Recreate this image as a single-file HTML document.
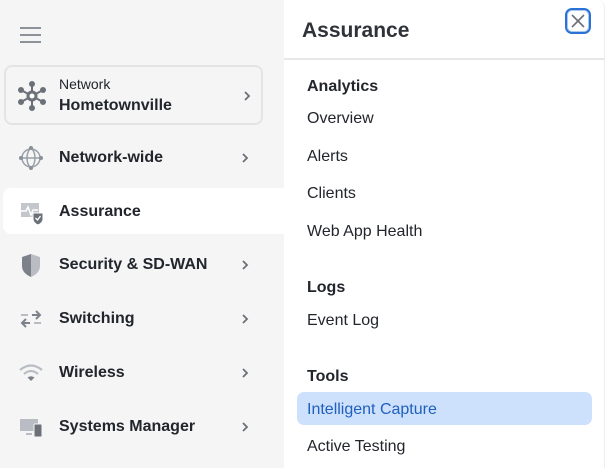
<!DOCTYPE html>
<html><head><style>
*{margin:0;padding:0;box-sizing:border-box}
body{width:608px;height:468px;overflow:hidden;background:#fff;font-family:"Liberation Sans",sans-serif;position:relative;color:#22252b}
#side{position:absolute;left:0;top:0;width:284px;height:468px;background:#f5f5f5}
.row{position:absolute;left:0;width:284px;height:46px;font-size:16px;font-weight:bold;color:#22252b}
.row .ic{position:absolute;left:18px;top:11px;width:26px;height:26px}
.row .t{position:absolute;left:59px;top:15px;line-height:18px}
.chev{position:absolute;left:240px;top:50%;margin-top:-4px;width:10px;height:10px}
.sel{left:3px;width:281px;background:#fff;border-radius:8px 0 0 8px}
.sel .t{left:56px}
#net{position:absolute;left:4px;top:65px;width:259px;height:60px;border:2px solid #e2e4e6;border-radius:8px;background:#f5f5f5}
#panel{position:absolute;left:284px;top:0;width:321px;height:468px;background:#fff;border-right:1px solid #eee;border-radius:0 8px 0 0}
.p{position:absolute;left:23px;font-size:16px;color:#22252b}
.h{font-weight:bold}
</style></head><body>
<div id="side">
<svg style="position:absolute;left:20px;top:27px" width="22" height="16"><g stroke="#6b7079" stroke-width="1.6"><line x1="0" y1="1" x2="21" y2="1"/><line x1="0" y1="8" x2="21" y2="8"/><line x1="0" y1="15" x2="21" y2="15"/></g></svg>
<div id="net">
<svg style="position:absolute;left:11px;top:14px" width="30" height="30" viewBox="0 0 30 30"><g stroke="#6b7079" stroke-width="2" fill="#6b7079"><line x1="15" y1="3" x2="15" y2="27"/><line x1="4" y1="9" x2="26" y2="21"/><line x1="4" y1="21" x2="26" y2="9"/><circle cx="15" cy="3" r="2"/><circle cx="15" cy="27" r="2"/><circle cx="4" cy="9" r="2"/><circle cx="26" cy="9" r="2"/><circle cx="4" cy="21" r="2"/><circle cx="26" cy="21" r="2"/><circle cx="15" cy="15" r="4" fill="#fff" stroke-width="3"/></g></svg>
<div style="position:absolute;left:53px;top:9px;font-size:14px;color:#22252b">Network</div>
<div style="position:absolute;left:53px;top:30px;font-size:16px;font-weight:bold">Hometownville</div>
<svg class="chev" style="left:236px" viewBox="0 0 10 10"><path d="M3 1 L7 5 L3 9" fill="none" stroke="#6b7079" stroke-width="1.8"/></svg>
</div>
<div class="row" style="top:134px"><svg class="ic" viewBox="0 0 26 26"><g fill="none" stroke="#9aa0a8" stroke-width="1.5"><circle cx="13" cy="13" r="9"/><ellipse cx="13" cy="13" rx="4" ry="9"/><line x1="4" y1="13" x2="22" y2="13"/></g><g fill="#8a9099"><circle cx="13" cy="3" r="2"/><circle cx="13" cy="23" r="2"/><circle cx="3" cy="13" r="2"/><circle cx="23" cy="13" r="2"/></g></svg><span class="t">Network-wide</span><svg class="chev" viewBox="0 0 10 10"><path d="M3 1 L7 5 L3 9" fill="none" stroke="#6b7079" stroke-width="1.8"/></svg></div>
<div class="row sel" style="top:188px"><svg class="ic" style="left:15px" viewBox="0 0 26 26"><rect x="3" y="4" width="18" height="14" fill="#c3c7cc"/><path d="M3 12 L8 12 L10 8 L13 16 L15 11 L20 11" fill="none" stroke="#fff" stroke-width="1.5"/><path d="M15 14 L25 14 L25 20 Q25 24 20 26 Q15 24 15 20Z" fill="#6b7079" stroke="#fff" stroke-width="1"/><path d="M17.5 19 L19.5 21 L22.5 17" fill="none" stroke="#fff" stroke-width="1.3"/></svg><span class="t">Assurance</span></div>
<div class="row" style="top:241px"><svg class="ic" viewBox="0 0 26 26"><path d="M13 2 L4 5 L4 14 Q4 21 13 25Z" fill="#7d828a"/><path d="M13 2 L22 5 L22 14 Q22 21 13 25Z" fill="#b9bdc3"/></svg><span class="t">Security &amp; SD-WAN</span><svg class="chev" viewBox="0 0 10 10"><path d="M3 1 L7 5 L3 9" fill="none" stroke="#6b7079" stroke-width="1.8"/></svg></div>
<div class="row" style="top:295px"><svg class="ic" viewBox="0 0 26 26"><g stroke-width="2" fill="none"><path d="M3 9 H10" stroke="#b9bdc3"/><path d="M14 9 H22 M18 5 L22 9 L18 13" stroke="#7d828a"/><path d="M16 17 H23" stroke="#b9bdc3"/><path d="M12 17 H4 M8 13 L4 17 L8 21" stroke="#7d828a"/></g></svg><span class="t">Switching</span><svg class="chev" viewBox="0 0 10 10"><path d="M3 1 L7 5 L3 9" fill="none" stroke="#6b7079" stroke-width="1.8"/></svg></div>
<div class="row" style="top:349px"><svg class="ic" viewBox="0 0 26 26"><g fill="none" stroke="#b9bdc3" stroke-width="2.2"><path d="M2 10 Q13 1 24 10"/><path d="M6 14 Q13 8 20 14"/></g><path d="M9.5 17.5 Q13 15 16.5 17.5 L13 21Z" fill="#7d828a"/></svg><span class="t">Wireless</span><svg class="chev" viewBox="0 0 10 10"><path d="M3 1 L7 5 L3 9" fill="none" stroke="#6b7079" stroke-width="1.8"/></svg></div>
<div class="row" style="top:403px"><svg class="ic" viewBox="0 0 26 26"><rect x="2" y="5" width="18" height="12" fill="#b9bdc3"/><rect x="8" y="19" width="6" height="2" fill="#b9bdc3"/><rect x="16" y="10" width="8" height="13" rx="1" fill="#6b7079" stroke="#f5f5f5" stroke-width="1"/></svg><span class="t">Systems Manager</span><svg class="chev" viewBox="0 0 10 10"><path d="M3 1 L7 5 L3 9" fill="none" stroke="#6b7079" stroke-width="1.8"/></svg></div>
</div>
<div id="panel">
<div style="position:absolute;left:18px;top:19px;font-size:21px;font-weight:bold;color:#2f3238">Assurance</div>
<div style="position:absolute;left:281px;top:8px;width:26px;height:26px;border:2.5px solid #2a72d4;border-radius:7px;box-shadow:0 0 0 1px #a9c8f0 inset"></div>
<svg style="position:absolute;left:287px;top:14px" width="14" height="14"><path d="M1 1 L13 13 M13 1 L1 13" stroke="#6b7079" stroke-width="1.6"/></svg>
<div style="position:absolute;left:0;top:58px;width:321px;height:2px;background:#e8e8e8"></div>
<div class="p h" style="top:78px">Analytics</div>
<div class="p" style="top:110px">Overview</div>
<div class="p" style="top:148px">Alerts</div>
<div class="p" style="top:185px">Clients</div>
<div class="p" style="top:223px">Web App Health</div>
<div class="p h" style="top:279px">Logs</div>
<div class="p" style="top:312px">Event Log</div>
<div class="p h" style="top:368px">Tools</div>
<div style="position:absolute;left:13px;top:392px;width:295px;height:33px;background:#cde1fc;border-radius:7px"></div>
<div class="p" style="top:401px;color:#1f5fbf">Intelligent Capture</div>
<div class="p" style="top:438px">Active Testing</div>
</div>
</body></html>
